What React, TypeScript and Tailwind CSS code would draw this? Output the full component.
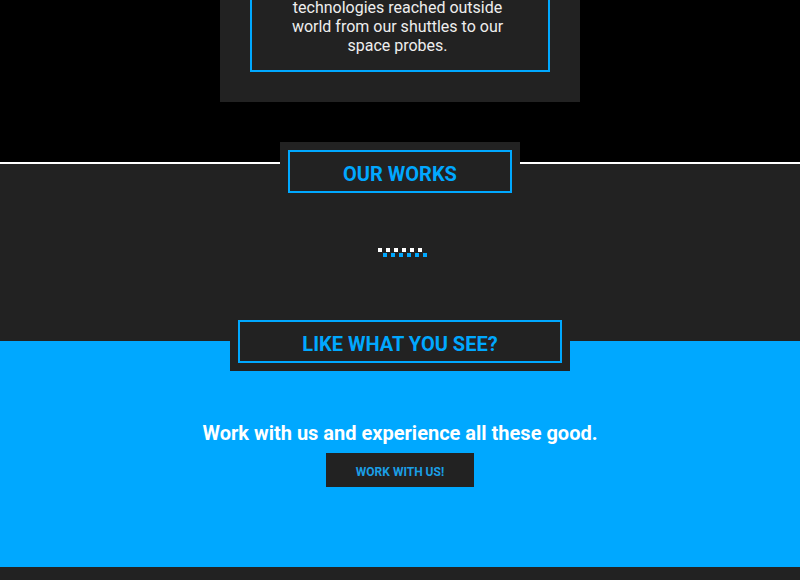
import React from "react";

function Dots() {
  const idx = [0, 1, 2, 3, 4, 5];
  return (
    <div className="relative w-[50px] h-[10px]">
      <div className="flex gap-[4px]">
        {idx.map((i) => (
          <div key={i} className="w-[4px] h-[4px] bg-white" />
        ))}
      </div>
      <div className="flex gap-[4px] ml-[5px] mt-[1px]">
        {idx.map((i) => (
          <div key={i} className="w-[4px] h-[4px] bg-[#00a8ff]" />
        ))}
      </div>
    </div>
  );
}

function TitleBox({ text, outerW, innerW }: { text: string; outerW: string; innerW: string }) {
  return (
    <div className={`bg-[#222222] p-[8px] ${outerW} flex justify-center`}>
      <div
        className={`${innerW} h-[43px] pt-[4px] border-2 border-[#00a8ff] flex items-center justify-center text-[20px] font-bold text-[#00a8ff] leading-none`}
      >
        {text}
      </div>
    </div>
  );
}

export default function App() {
  return (
    <div
      className="w-full min-h-[580px] bg-[#222222]"
      style={{ fontFamily: "Roboto, 'Liberation Sans', sans-serif" }}
    >
      {/* Top black section */}
      <div className="h-[162px] bg-black flex justify-center items-end overflow-hidden">
        <div className="w-[360px] bg-[#222222] px-[30px] pb-[30px] mb-[60px] shrink-0">
          <div className="border-2 border-[#00a8ff] border-t-0 pb-[15px] pr-[5px] text-center text-[16px] leading-[19px] text-[#eeeeee]">
            technologies reached outside
            <br />
            world from our shuttles to our
            <br />
            space probes.
          </div>
        </div>
      </div>
      <div className="h-[2px] bg-white" />

      {/* Our works section */}
      <div className="h-[177px] bg-[#222222] flex flex-col items-center">
        <div className="-mt-[22px]">
          <TitleBox text="OUR WORKS" outerW="w-[240px]" innerW="w-[224px]" />
        </div>
        <div className="mt-[47px] ml-[6px]">
          <Dots />
        </div>
      </div>

      {/* Like what you see section */}
      <div className="h-[226px] bg-[#00a8ff] flex flex-col items-center">
        <div className="-mt-[29px]">
          <TitleBox text="LIKE WHAT YOU SEE?" outerW="w-[340px]" innerW="w-[324px]" />
        </div>
        <div className="mt-[50px] text-[20px] leading-[24px] font-bold text-white">
          Work with us and experience all these good.
        </div>
        <button className="mt-[8px] w-[148px] h-[34px] pt-[3px] bg-[#222222] text-[12px] font-bold text-[#1a9fe6] flex items-center justify-center">
          WORK WITH US!
        </button>
      </div>

      {/* Footer dark */}
      <div className="h-[13px] bg-[#222222]" />
    </div>
  );
}
